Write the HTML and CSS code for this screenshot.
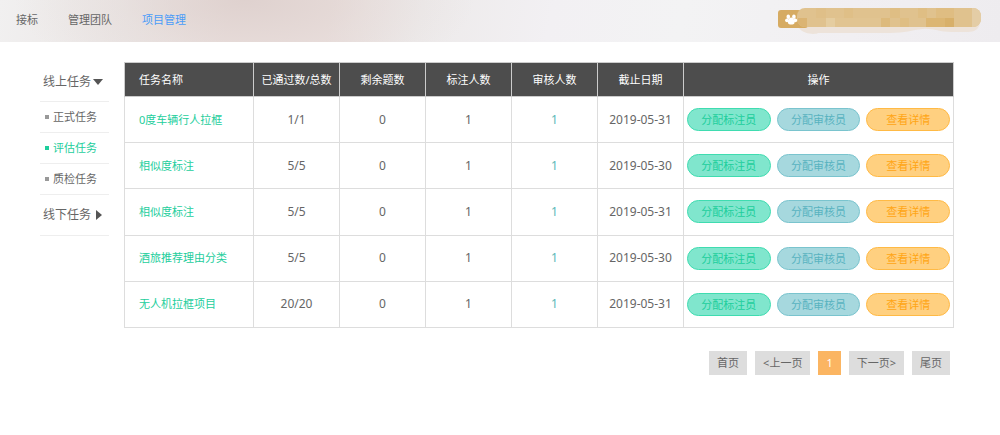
FILE: index.html
```html
<!DOCTYPE html>
<html lang="zh-CN">
<head>
<meta charset="utf-8">
<title>项目管理</title>
<link rel="stylesheet" href="styles.css">
</head>
<body>
<header class="topbar">
  <nav class="topnav">
    <a href="#">接标</a>
    <a href="#">管理团队</a>
    <a href="#" class="active">项目管理</a>
  </nav>
  <svg class="account" width="203" height="26" viewBox="0 0 203 26" role="img" aria-label="account">
    <path d="M19 12C19 8 205 5 202 14C202 21 196 24 190 24H174C160 24 155 20 145 21C133 22 128 25 112 25H40C37 27 25 26 21 20Z" fill="#ede3da"/>
    <rect x="0" y="2" width="30" height="18" rx="3" fill="#d6ab62"/>
    <g fill="#fff">
      <ellipse cx="10.300" cy="8.800" rx="1.800" ry="2.300"/>
      <ellipse cx="15.900" cy="8.800" rx="1.800" ry="2.300"/>
      <ellipse cx="9" cy="12.300" rx="1.900" ry="1.900"/>
      <ellipse cx="17.300" cy="12.300" rx="1.900" ry="1.900"/>
      <path d="M13.200 9.500C15.500 9.500 17 13 16.500 15C16 17 10.500 17 10 15C9.500 13 11 9.500 13.200 9.500Z"/>
    </g>
    <defs><clipPath id="pill"><rect x="19" y="0" width="184" height="19" rx="8"/></clipPath></defs>
    <g clip-path="url(#pill)">
      <rect x="19" y="0" width="184" height="19" fill="#e0c28e"/>
      <rect x="38" y="0" width="10" height="10" fill="#dfbf88"/>
      <rect x="66" y="0" width="9" height="10" fill="#dfbf87"/>
      <rect x="112" y="0" width="10" height="10" fill="#dfbe84"/>
      <rect x="140" y="0" width="9" height="10" fill="#dfbe84"/>
      <rect x="158" y="0" width="18" height="10" fill="#dfbd82"/>
      <rect x="20" y="10" width="9" height="9" fill="#dbb473"/>
      <rect x="48" y="10" width="9" height="9" fill="#e5cda0"/>
      <rect x="57" y="10" width="46" height="9" fill="#e1c491"/>
      <rect x="103" y="10" width="9" height="9" fill="#ddba7c"/>
      <rect x="122" y="10" width="9" height="9" fill="#dfbe83"/>
      <rect x="148" y="10" width="28" height="9" fill="#dcb673"/>
      <rect x="167" y="10" width="9" height="9" fill="#d8b06a"/>
      <rect x="194" y="0" width="9" height="19" fill="#e4cda6"/>
    </g>
  </svg>
</header>
<main class="layout">
  <aside class="side">
    <button type="button" class="group">线上任务<svg width="10" height="6" viewBox="0 0 10 6"><path d="M0 0H10L5 6Z"/></svg></button>
    <ul class="sub">
      <li><a href="#">正式任务</a></li>
      <li><a href="#" class="current">评估任务</a></li>
      <li><a href="#">质检任务</a></li>
    </ul>
    <button type="button" class="group closed">线下任务<svg width="6" height="10" viewBox="0 0 6 10"><path d="M0 0L6 5L0 10Z"/></svg></button>
  </aside>
  <section class="content">
    <table class="tasks">
      <colgroup><col class="c-name"><col class="c-num"><col class="c-num"><col class="c-num"><col class="c-num"><col class="c-num"><col></colgroup>
      <thead>
        <tr><th class="name">任务名称</th><th>已通过数/总数</th><th>剩余题数</th><th>标注人数</th><th>审核人数</th><th>截止日期</th><th>操作</th></tr>
      </thead>
      <tbody>
        <tr><td class="name"><a href="#">0度车辆行人拉框</a></td><td>1/1</td><td>0</td><td>1</td><td><a href="#" class="review">1</a></td><td>2019-05-31</td><td><div class="actions"><button type="button" class="pill green">分配标注员</button><button type="button" class="pill blue">分配审核员</button><button type="button" class="pill orange">查看详情</button></div></td></tr>
        <tr><td class="name"><a href="#">相似度标注</a></td><td>5/5</td><td>0</td><td>1</td><td><a href="#" class="review">1</a></td><td>2019-05-30</td><td><div class="actions"><button type="button" class="pill green">分配标注员</button><button type="button" class="pill blue">分配审核员</button><button type="button" class="pill orange">查看详情</button></div></td></tr>
        <tr><td class="name"><a href="#">相似度标注</a></td><td>5/5</td><td>0</td><td>1</td><td><a href="#" class="review">1</a></td><td>2019-05-31</td><td><div class="actions"><button type="button" class="pill green">分配标注员</button><button type="button" class="pill blue">分配审核员</button><button type="button" class="pill orange">查看详情</button></div></td></tr>
        <tr><td class="name"><a href="#">酒旅推荐理由分类</a></td><td>5/5</td><td>0</td><td>1</td><td><a href="#" class="review">1</a></td><td>2019-05-30</td><td><div class="actions"><button type="button" class="pill green">分配标注员</button><button type="button" class="pill blue">分配审核员</button><button type="button" class="pill orange">查看详情</button></div></td></tr>
        <tr><td class="name"><a href="#">无人机拉框项目</a></td><td>20/20</td><td>0</td><td>1</td><td><a href="#" class="review">1</a></td><td>2019-05-31</td><td><div class="actions"><button type="button" class="pill green">分配标注员</button><button type="button" class="pill blue">分配审核员</button><button type="button" class="pill orange">查看详情</button></div></td></tr>
      </tbody>
    </table>
    <nav class="pager">
      <a href="#">首页</a>
      <a href="#">&lt;上一页</a>
      <a href="#" class="on">1</a>
      <a href="#">下一页&gt;</a>
      <a href="#">尾页</a>
    </nav>
  </section>
</main>
</body>
</html>
```
FILE: styles.css
```css
* { box-sizing: border-box; }
body {
  margin: 0;
  background: #fff;
  color: #666;
  font-family: "Noto Sans", "Noto Sans CJK SC", sans-serif;
  font-size: 11px;
  line-height: 16px;
}
a { color: inherit; text-decoration: none; }
button { font: inherit; cursor: pointer; }

.topbar {
  display: flex;
  justify-content: space-between;
  align-items: flex-start;
  height: 42px;
  padding: 8px 19px 0 16px;
  background:
    radial-gradient(ellipse 230px 90px at 245px 0, rgba(220, 206, 203, 0.8) 0%, rgba(223, 211, 208, 0.3) 55%, rgba(223, 211, 208, 0) 100%),
    linear-gradient(100deg, #f1f0f0 0%, #ebe6e5 13%, #eadfdd 23%, #eadfdd 33%, #edeaea 42%, #f2f0f3 55%, #f3f3f4 68%, #f1eff2 85%, #eeecef 100%);
}
.topnav { display: flex; gap: 30px; padding-top: 4px; }
.topnav .active { color: #4a9cf8; }

.layout { display: flex; gap: 15px; padding: 20px 46px 0 40px; }

.side { flex: none; width: 69px; }
.group {
  display: flex;
  align-items: center;
  gap: 2px;
  width: 100%;
  height: 40px;
  padding: 0 3px;
  border: 0;
  border-bottom: 1px solid #eee;
  background: none;
  color: #666;
  font-size: 12px;
  text-align: left;
}
.group.closed { height: 41px; gap: 5px; }
.group svg { fill: #555; }
.sub { margin: 0; padding: 0; list-style: none; }
.sub a {
  display: flex;
  align-items: center;
  gap: 4px;
  height: 31px;
  padding-left: 5px;
  border-bottom: 1px solid #eee;
}
.sub a::before {
  content: "";
  width: 4px;
  height: 4px;
  background: #999;
}
.sub .current { color: #1dce9c; }
.sub .current::before { background: #1dce9c; }

.content { flex: 1; min-width: 0; }
.tasks {
  width: 100%;
  height: 266px;
  border-collapse: collapse;
  table-layout: fixed;
  border: 1px solid #ddd;
  border-bottom-color: #ccc;
}
.c-name { width: 129px; }
.c-num { width: 86px; }
.tasks th {
  height: 34px;
  padding: 0;
  border: 1px solid #ccc;
  background: #4d4d4d;
  color: #fff;
  font-weight: 400;
}
.tasks td {
  padding: 0;
  border: 1px solid #ddd;
  font-size: 12px;
  text-align: center;
}
.tasks .name { padding-left: 14px; text-align: left; font-size: 11px; }
.tasks td.name { color: #1dce9c; }
.review { color: #5cb8b8; }

.actions { display: flex; gap: 6px; padding: 0 3px; }
.pill {
  flex: 1;
  height: 23px;
  padding: 1px 0 0;
  border: 1px solid;
  border-radius: 12px;
  font-size: 11px;
  line-height: 16px;
}
.green { background: #80e6cd; border-color: #3fdcb0; color: #1dce9c; }
.blue { background: #a6d8de; border-color: #7ac4ce; color: #58b3c0; }
.orange { background: #ffd080; border-color: #ffba45; color: #ffa514; }

.pager {
  display: flex;
  justify-content: flex-end;
  gap: 8px;
  margin-top: 23px;
  padding-right: 4px;
}
.pager a {
  padding: 4px 8px;
  background: #ddd;
}
.pager .on { background: #fbb562; color: #fff; }
```
